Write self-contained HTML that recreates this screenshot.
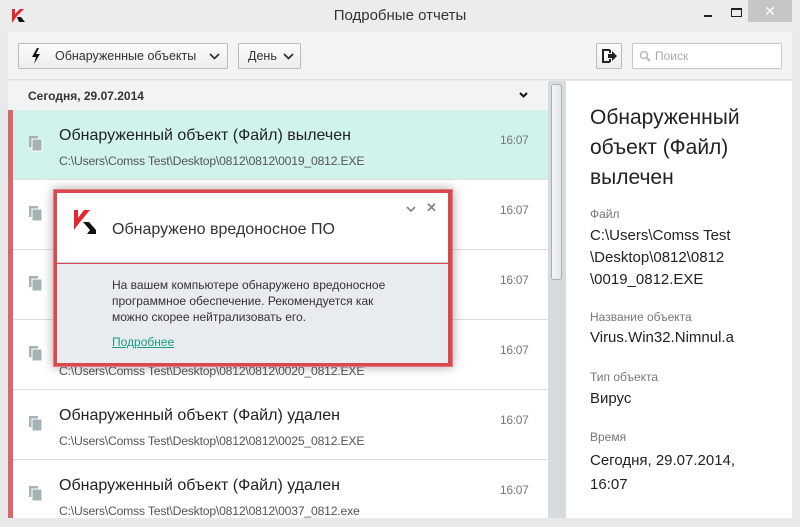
<!DOCTYPE html>
<html><head><meta charset="utf-8"><style>
*{margin:0;padding:0;box-sizing:border-box}
body{width:800px;height:527px;overflow:hidden;background:#e9e9e9;font-family:"Liberation Sans",sans-serif;position:relative;color:#222}
.a{position:absolute}
.title{left:0;top:0;width:800px;height:32px;background:#ececec;text-align:center;line-height:32px;font-size:15px;color:#333}
.tb{left:8px;top:32px;width:784px;height:48px;background:#f2f4f4;border-bottom:1px solid #dde1e2}
.btn{border:1px solid #b8bcbe;border-radius:2px;background:linear-gradient(#fbfbfb,#eceeee);height:26px;top:43px;font-size:12.5px;line-height:24px;color:#333}
.list{left:8px;top:81px;width:540px;height:437px;background:#fff;overflow:hidden}
.hdr{left:0;top:0;width:540px;height:29px;background:#f2f4f4;font-size:12px;font-weight:bold;line-height:31px;padding-left:20px;color:#333}
.row{left:0;width:540px;height:70px;border-bottom:1px solid #dcdfe0;background:#fff}
.row .bar{left:0;top:0;width:5px;height:70px;background:#d9666a}
.row .t{left:51px;top:17px;font-size:16px;color:#222;white-space:nowrap}
.row .p{left:51px;top:44px;font-size:12.2px;color:#555;white-space:nowrap;letter-spacing:-0.2px}
.row .tm{left:492px;top:23px;font-size:12px;color:#777;letter-spacing:-0.3px}
.ic{left:21px;top:26px}
.rp{left:566px;top:81px;width:226px;height:437px;background:#fff}
.lbl{font-size:12px;color:#777;left:24px}
.val{font-size:15px;color:#222;left:24px;line-height:22px}
</style></head><body>
<div class="a title">Подробные отчеты</div>
<svg class="a" style="left:12px;top:9px" width="14" height="14" viewBox="0 0 14 14"><polygon points="0,0 3,0 3,5 8,0 12,0 5,7 0,14" fill="#e5262c"/><polygon points="5,8 9,8 13,13 7,13" fill="#111"/></svg>
<div class="a" style="left:704px;top:15px;width:8px;height:2px;background:#222"></div>
<div class="a" style="left:731px;top:8px;width:11px;height:9px;border:1px solid #222;border-top-width:2px"></div>
<div class="a" style="left:748px;top:0;width:44px;height:22px;background:#c6c6c6;color:#fff;text-align:center;font-size:14px;line-height:22px">✕</div>
<div class="a tb"></div>
<div class="a btn" style="left:18px;width:210px;padding-left:36px">Обнаруженные объекты
<svg class="a" style="left:12px;top:4px" width="10" height="16" viewBox="0 0 10 16"><polygon points="6,0 1,9 5,9 3,16 9,6 5,6 8,0" fill="#111"/></svg>
<svg class="a" style="left:190px;top:9px" width="11" height="7" viewBox="0 0 11 7"><polyline points="1,1 5.5,5.5 10,1" fill="none" stroke="#333" stroke-width="1.8"/></svg></div>
<div class="a btn" style="left:238px;width:63px;padding-left:9px">День
<svg class="a" style="left:44px;top:9px" width="11" height="7" viewBox="0 0 11 7"><polyline points="1,1 5.5,5.5 10,1" fill="none" stroke="#333" stroke-width="1.8"/></svg></div>
<div class="a btn" style="left:596px;width:26px">
<svg class="a" style="left:4px;top:4px" width="17" height="16" viewBox="0 0 17 16"><path d="M9 2H2v12h7M9 5v-3M9 14v-3" fill="none" stroke="#222" stroke-width="2"/><polygon points="7,6 11,6 11,3 16,8 11,13 11,10 7,10" fill="#222"/></svg></div>
<div class="a" style="left:632px;top:43px;width:150px;height:26px;border:1px solid #c4c8ca;background:#fff;border-radius:2px;font-size:12px;color:#aaa;line-height:24px;padding-left:22px">Поиск
<svg class="a" style="left:6px;top:6px" width="12" height="12" viewBox="0 0 12 12"><circle cx="5" cy="5" r="3.5" fill="none" stroke="#bbb" stroke-width="1.6"/><line x1="7.5" y1="7.5" x2="11" y2="11" stroke="#bbb" stroke-width="2"/></svg></div>

<div class="a list">
<div class="a hdr">Сегодня, 29.07.2014
<svg class="a" style="left:511px;top:11px" width="9" height="6" viewBox="0 0 9 6"><polyline points="1,1 4.5,4.5 8,1" fill="none" stroke="#111" stroke-width="2"/></svg></div>
<div class="a row" style="top:29px;background:#d0f4ec"><div class="a bar"></div><svg class="a ic" width="14" height="16"><rect x="0" y="0" width="9" height="11" fill="#a5b3b5"/><rect x="3" y="3" width="10" height="12" fill="#a5b3b5" stroke="#fff"/></svg><div class="a t">Обнаруженный объект (Файл) вылечен</div><div class="a p">C:\Users\Comss Test\Desktop\0812\0812\0019_0812.EXE</div><div class="a tm">16:07</div></div>
<div class="a row" style="top:99px"><div class="a bar"></div><svg class="a ic" width="14" height="16"><rect x="0" y="0" width="9" height="11" fill="#a5b3b5"/><rect x="3" y="3" width="10" height="12" fill="#a5b3b5" stroke="#fff"/></svg><div class="a tm">16:07</div></div>
<div class="a row" style="top:169px"><div class="a bar"></div><svg class="a ic" width="14" height="16"><rect x="0" y="0" width="9" height="11" fill="#a5b3b5"/><rect x="3" y="3" width="10" height="12" fill="#a5b3b5" stroke="#fff"/></svg><div class="a tm">16:07</div></div>
<div class="a row" style="top:239px"><div class="a bar"></div><svg class="a ic" width="14" height="16"><rect x="0" y="0" width="9" height="11" fill="#a5b3b5"/><rect x="3" y="3" width="10" height="12" fill="#a5b3b5" stroke="#fff"/></svg><div class="a p">C:\Users\Comss Test\Desktop\0812\0812\0020_0812.EXE</div><div class="a tm">16:07</div></div>
<div class="a row" style="top:309px"><div class="a bar"></div><svg class="a ic" width="14" height="16"><rect x="0" y="0" width="9" height="11" fill="#a5b3b5"/><rect x="3" y="3" width="10" height="12" fill="#a5b3b5" stroke="#fff"/></svg><div class="a t">Обнаруженный объект (Файл) удален</div><div class="a p">C:\Users\Comss Test\Desktop\0812\0812\0025_0812.EXE</div><div class="a tm">16:07</div></div>
<div class="a row" style="top:379px"><div class="a bar"></div><svg class="a ic" width="14" height="16"><rect x="0" y="0" width="9" height="11" fill="#a5b3b5"/><rect x="3" y="3" width="10" height="12" fill="#a5b3b5" stroke="#fff"/></svg><div class="a t">Обнаруженный объект (Файл) удален</div><div class="a p">C:\Users\Comss Test\Desktop\0812\0812\0037_0812.exe</div><div class="a tm">16:07</div></div>
</div>
<div class="a" style="left:548px;top:81px;width:18px;height:437px;background:#d5dbde"></div>
<div class="a" style="left:551px;top:84px;width:11px;height:196px;background:linear-gradient(90deg,#f4f6f6,#e2e6e7);border:1px solid #aab2b5;border-radius:3px"></div>
<div class="a rp">
<div class="a val" style="top:22px;font-size:21px;line-height:30px;width:210px">Обнаруженный объект (Файл) вылечен</div>
<div class="a lbl" style="top:126px">Файл</div>
<div class="a val" style="top:144px">C:\Users\Comss Test<br>\Desktop\0812\0812<br>\0019_0812.EXE</div>
<div class="a lbl" style="top:229px">Название объекта</div>
<div class="a val" style="top:246px">Virus.Win32.Nimnul.a</div>
<div class="a lbl" style="top:289px">Тип объекта</div>
<div class="a val" style="top:307px">Вирус</div>
<div class="a lbl" style="top:349px">Время</div>
<div class="a val" style="top:368px;line-height:24px">Сегодня, 29.07.2014,<br>16:07</div>
</div>

<div class="a" style="left:53px;top:189px;width:400px;height:178px;background:#d9484e;box-shadow:0 0 10px rgba(0,0,0,.35);border:1px solid #e27a7e"></div>
<div class="a" style="left:57px;top:193px;width:391px;height:70px;background:#fff;border-bottom:1px solid #cfd5d7"></div>
<div class="a" style="left:57px;top:264px;width:391px;height:99px;background:#e8ecee"></div>
<svg class="a" style="left:74px;top:210px" width="24" height="24" viewBox="0 0 24 24"><polygon points="0,0 4,0 4,8 10,0 16,0 6,12 0,20" fill="#e5262c"/><polygon points="9,12 15,12 22,20 22,24 13,24 16,20" fill="#111"/></svg>
<div class="a" style="left:112px;top:221px;font-size:16px;color:#333">Обнаружено вредоносное ПО</div>
<svg class="a" style="left:406px;top:206px" width="10" height="7" viewBox="0 0 10 7"><polyline points="1,1 5,5 9,1" fill="none" stroke="#888" stroke-width="1.8"/></svg>
<div class="a" style="left:426px;top:200px;font-size:13px;color:#888;font-weight:bold">✕</div>
<div class="a" style="left:112px;top:277px;font-size:12px;line-height:16px;color:#333">На вашем компьютере обнаружено вредоносное<br>программное обеспечение. Рекомендуется как<br>можно скорее нейтрализовать его.</div>
<div class="a" style="left:112px;top:335px;font-size:12px;color:#1c9c86;text-decoration:underline">Подробнее</div>
</body></html>
